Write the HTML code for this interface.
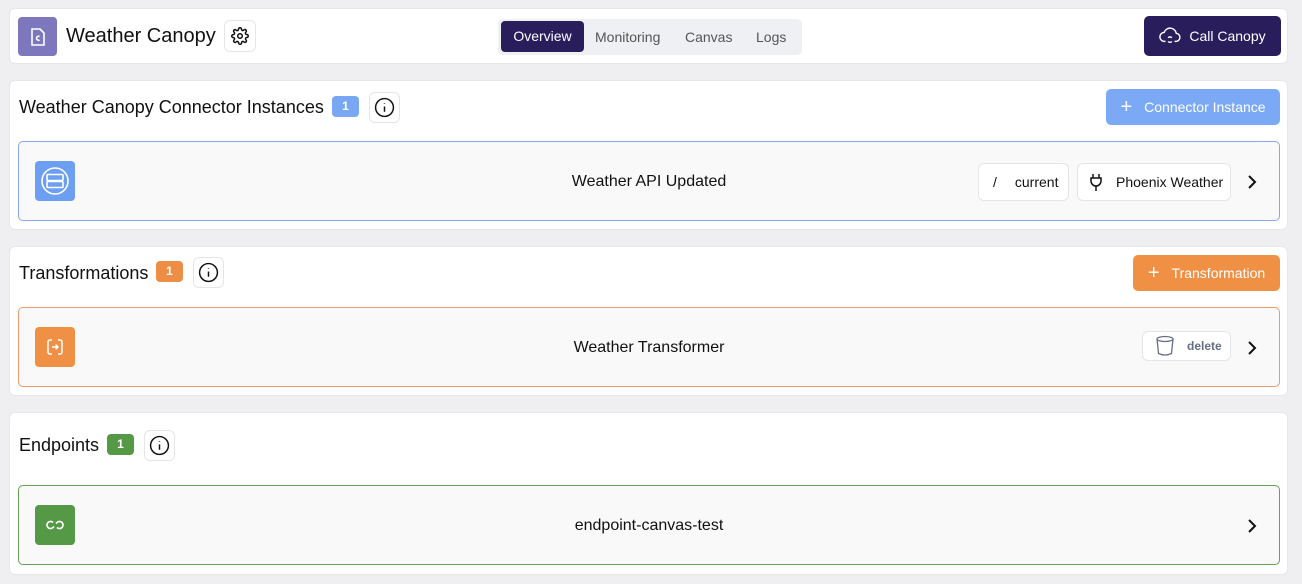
<!DOCTYPE html>
<html><head><style>
*{box-sizing:border-box;margin:0;padding:0}
body{width:1302px;height:584px;background:#efeff1;font-family:"Liberation Sans",sans-serif;color:#111;position:relative;overflow:hidden}
.abs{position:absolute}
.card{position:absolute;left:9px;width:1279px;background:#fff;border-radius:6px;border:1px solid #e6e7ea}
.title{position:absolute;left:9px;font-size:18px}
.badge{position:absolute;height:21px;width:27px;border-radius:4px;color:#fff;font-size:12px;font-weight:bold;text-align:center;line-height:21px}
.info{position:absolute;width:31px;height:31px;border:1px solid #e3e5e8;border-radius:6px;background:#fff;display:flex;align-items:center;justify-content:center}
.inner{position:absolute;left:8px;width:1262px;height:80px;border-radius:5px;background:#f9f9fa}
.ico{position:absolute;left:16px;top:19px;width:40px;height:40px;border-radius:4px;display:flex;align-items:center;justify-content:center}
.name{position:absolute;left:0;right:0;top:31px;text-align:center;font-size:16px}
.chev{position:absolute;right:22px;top:32px}
.chip{position:absolute;top:21px;height:38px;border:1px solid #e3e5e8;border-radius:6px;background:#fff;font-size:14px;display:flex;align-items:center}
.btn{position:absolute;height:36px;border-radius:5px;color:#fff;font-size:14px;display:flex;align-items:center;justify-content:center;gap:12px}
</style></head><body>
<div class="card" style="top:8px;height:56px">
 <div class="abs" style="left:8px;top:8px;width:39px;height:39px;border-radius:4px;background:#7d78bd;display:flex;align-items:center;justify-content:center">
  <svg width="18" height="20" viewBox="0 0 18 20" fill="none" stroke="#fff" stroke-width="1.6"><path d="M3 2h8l4 4v12H3z"/><path d="M10.5 9.5a2 2 0 1 0 0 3.5" /></svg>
 </div>
 <div class="abs" style="left:56px;top:16px;font-size:20px">Weather Canopy</div>
 <div class="info" style="left:214px;top:11px;width:32px;height:32px">
  <svg width="18" height="18" viewBox="0 0 24 24" fill="none" stroke="#111" stroke-width="2"><circle cx="12" cy="12" r="3"/><path d="M19.4 15a1.7 1.7 0 0 0 .3 1.8l.1.1a2 2 0 1 1-2.8 2.8l-.1-.1a1.7 1.7 0 0 0-1.8-.3 1.7 1.7 0 0 0-1 1.5V21a2 2 0 1 1-4 0v-.1a1.7 1.7 0 0 0-1.100-1.5 1.7 1.7 0 0 0-1.8.3l-.1.1a2 2 0 1 1-2.8-2.8l.1-.1a1.7 1.7 0 0 0 .3-1.8 1.7 1.7 0 0 0-1.5-1H3a2 2 0 1 1 0-4h.1a1.7 1.7 0 0 0 1.5-1.1 1.7 1.7 0 0 0-.3-1.8l-.1-.1a2 2 0 1 1 2.8-2.8l.1.1a1.7 1.7 0 0 0 1.8.3H9a1.7 1.7 0 0 0 1-1.5V3a2 2 0 1 1 4 0v.1a1.7 1.7 0 0 0 1 1.5 1.7 1.7 0 0 0 1.8-.3l.1-.1a2 2 0 1 1 2.8 2.8l-.1.1a1.7 1.7 0 0 0-.3 1.8V9a1.7 1.7 0 0 0 1.5 1H21a2 2 0 1 1 0 4h-.1a1.7 1.7 0 0 0-1.5 1z"/></svg>
 </div>
 <div class="abs" style="left:488px;top:10px;width:304px;height:36px;background:#eef0f3;border-radius:5px;font-size:14px;color:#555">
  <div class="abs" style="left:3px;top:2px;width:83px;height:31px;background:#2a1d5c;color:#fff;border-radius:4px;text-align:center;line-height:31px">Overview</div>
  <div class="abs" style="left:97px;top:10px">Monitoring</div>
  <div class="abs" style="left:187px;top:10px">Canvas</div>
  <div class="abs" style="left:258px;top:10px">Logs</div>
 </div>
 <div class="btn" style="left:1134px;top:7px;width:137px;height:40px;background:#2a1d5c;gap:8px">
  <svg width="22" height="18" viewBox="0 0 24 20" fill="none" stroke="#fff" stroke-width="1.6"><path d="M7 16H6a5 5 0 0 1-.5-10A7 7 0 0 1 19 7a4.5 4.5 0 0 1-1 9h-1"/><path d="M10 12a2.5 2.5 0 0 1 4 0M14 16a2.5 2.5 0 0 1-4 0"/></svg>Call Canopy</div>
</div>

<div class="card" style="top:80px;height:150px">
 <div class="title" style="top:16px">Weather Canopy Connector Instances</div>
 <div class="badge" style="left:322px;top:15px;background:#7aa7f3">1</div>
 <div class="info" style="left:359px;top:11px"><svg width="21" height="21" viewBox="0 0 20 20" fill="none" stroke="#111" stroke-width="1.4"><circle cx="10" cy="10" r="8.5"/><path d="M10 9v5M10 6v.5"/></svg></div>
 <div class="btn" style="left:1096px;top:8px;width:174px;background:#7ca9f6"><span style="font-size:20px;font-weight:300">+</span>Connector Instance</div>
 <div class="inner" style="top:60px;border:1px solid #89a8ec">
  <div class="ico" style="background:#6c9ef2"><svg width="30" height="30" viewBox="0 0 30 30" fill="none" stroke="#fff" stroke-width="1.6"><circle cx="15" cy="15" r="13"/><rect x="7" y="8.5" width="16" height="6" rx="1"/><rect x="7" y="15.5" width="16" height="6" rx="1"/></svg></div>
  <div class="name">Weather API Updated</div>
  <div class="chip" style="left:959px;width:91px"><span style="margin-left:14px;margin-right:18px">/</span>current</div>
  <div class="chip" style="left:1058px;width:154px"><svg style="margin-left:12px;margin-right:14px" width="12" height="18" viewBox="0 0 12 18" fill="none" stroke="#111" stroke-width="1.5"><path d="M3 1v4M9 1v4M1 5h10v3a5 5 0 0 1-10 0zM6 13v5"/></svg>Phoenix Weather</div>
  <svg class="chev" width="10" height="16" viewBox="0 0 10 16" fill="none" stroke="#111" stroke-width="2"><path d="M2 2l6 6-6 6"/></svg>
 </div>
</div>

<div class="card" style="top:246px;height:150px">
 <div class="title" style="top:16px">Transformations</div>
 <div class="badge" style="left:146px;top:14px;background:#ee8e44">1</div>
 <div class="info" style="left:183px;top:10px"><svg width="21" height="21" viewBox="0 0 20 20" fill="none" stroke="#111" stroke-width="1.4"><circle cx="10" cy="10" r="8.5"/><path d="M10 9v5M10 6v.5"/></svg></div>
 <div class="btn" style="left:1123px;top:8px;width:147px;background:#ef9045"><span style="font-size:20px;font-weight:300">+</span>Transformation</div>
 <div class="inner" style="top:60px;border:1px solid #ee9a6d">
  <div class="ico" style="background:#ef9045"><svg width="20" height="20" viewBox="0 0 20 20" fill="none" stroke="#fff" stroke-width="1.5"><path d="M7 3H5a2 2 0 0 0-2 2v10a2 2 0 0 0 2 2h2M13 3h2a2 2 0 0 1 2 2v10a2 2 0 0 1-2 2h-2M7 10h6M10.5 7.5L13 10l-2.5 2.5"/></svg></div>
  <div class="name">Weather Transformer</div>
  <div class="chip" style="left:1123px;width:89px;top:23px;height:30px;color:#667085;font-size:12px;font-weight:bold"><svg style="margin-left:12px;margin-right:12px" width="20" height="22" viewBox="0 0 20 22" fill="none" stroke="#667085" stroke-width="1.3"><ellipse cx="10" cy="4" rx="8" ry="2.5"/><path d="M2 4l1.5 14.5Q10 21.5 16.5 18.5L18 4"/></svg>delete</div>
  <svg class="chev" width="10" height="16" viewBox="0 0 10 16" fill="none" stroke="#111" stroke-width="2"><path d="M2 2l6 6-6 6"/></svg>
 </div>
</div>

<div class="card" style="top:412px;height:163px">
 <div class="title" style="top:22px">Endpoints</div>
 <div class="badge" style="left:97px;top:21px;background:#559946">1</div>
 <div class="info" style="left:134px;top:17px"><svg width="21" height="21" viewBox="0 0 20 20" fill="none" stroke="#111" stroke-width="1.4"><circle cx="10" cy="10" r="8.5"/><path d="M10 9v5M10 6v.5"/></svg></div>
 <div class="inner" style="top:72px;border:1px solid #66a058">
  <div class="ico" style="background:#559946"><svg width="20" height="14" viewBox="0 0 20 14" fill="none" stroke="#fff" stroke-width="1.6"><path d="M8 4.5A3.5 3.5 0 0 0 3 9.5a3.5 3.5 0 0 0 5 0l1-1M12 9.5a3.5 3.5 0 0 0 5-5 3.5 3.5 0 0 0-5 0l-1 1"/></svg></div>
  <div class="name">endpoint-canvas-test</div>
  <svg class="chev" width="10" height="16" viewBox="0 0 10 16" fill="none" stroke="#111" stroke-width="2"><path d="M2 2l6 6-6 6"/></svg>
 </div>
</div>
</body></html>
